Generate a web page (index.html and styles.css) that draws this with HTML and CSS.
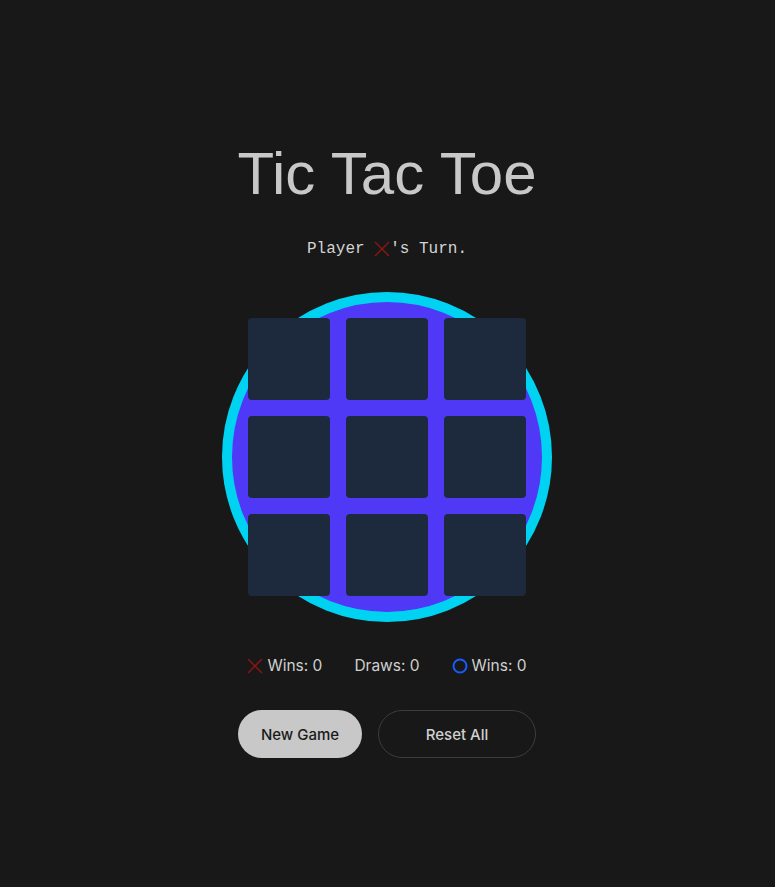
FILE: index.html
```html
<!DOCTYPE html>
<html lang="en">
<head>
<meta charset="utf-8">
<title>Tic Tac Toe</title>
<link rel="stylesheet" href="styles.css">
</head>
<body>
<main class="app">
  <h1 class="title">Tic Tac Toe</h1>
  <p class="turn">Player <svg class="icon-x" viewBox="0 0 16 16" width="16" height="16"><path d="M1 1 L15 15 M15 1 L1 15"/></svg>'s Turn.</p>
  <div class="board">
    <div class="grid">
      <button class="cell"></button><button class="cell"></button><button class="cell"></button>
      <button class="cell"></button><button class="cell"></button><button class="cell"></button>
      <button class="cell"></button><button class="cell"></button><button class="cell"></button>
    </div>
  </div>
  <div class="stats">
    <span class="stat"><svg class="icon-x" viewBox="0 0 16 16" width="16" height="16"><path d="M1 1 L15 15 M15 1 L1 15"/></svg>Wins: 0</span>
    <span class="stat">Draws: 0</span>
    <span class="stat"><svg class="icon-o" viewBox="0 0 16 16" width="16" height="16"><circle cx="8" cy="8" r="6.5"/></svg>Wins: 0</span>
  </div>
  <div class="actions">
    <button class="btn btn-primary">New Game</button>
    <button class="btn btn-outline">Reset All</button>
  </div>
</main>
</body>
</html>
```
FILE: styles.css
```css
* { box-sizing: border-box; }
html, body { margin: 0; background: #181818; }
body { min-height: 887px; color: #c8c8c8; font-family: "Inter", "Liberation Sans", sans-serif; }
.app { display: flex; flex-direction: column; align-items: center; padding-top: 138px; padding-right: 1px; }
.title {
  margin: 0;
  font-family: "Liberation Sans", Arial, sans-serif;
  font-weight: 400;
  font-size: 60px;
  line-height: 72px;
  color: #c8c8c8;
}
.turn {
  margin: 27px 0 0;
  display: flex;
  align-items: center;
  font-family: "Liberation Mono", "DejaVu Sans Mono", monospace;
  font-size: 16px;
  line-height: 24px;
  color: #d4d4d4;
  white-space: pre;
}
.icon-x { fill: none; stroke: #8f1414; stroke-width: 1.4; }
.icon-o { fill: none; stroke: #155dfc; stroke-width: 2; }
.board {
  margin-top: 31px;
  width: 330px;
  height: 330px;
  border-radius: 50%;
  border: 10px solid #00d3f2;
  background: #4f39f6;
  display: grid;
  place-content: center;
}
.grid {
  display: grid;
  grid-template-columns: repeat(3, 82px);
  grid-template-rows: repeat(3, 82px);
  gap: 16px;
}
.cell {
  border: 0;
  padding: 0;
  border-radius: 4px;
  background: #1d293d;
}
.stats {
  margin-top: 34px;
  display: flex;
  gap: 32px;
  font-size: 15.5px;
  line-height: 20px;
  color: #d0d0d0;
}
.stat { display: flex; align-items: center; gap: 4px; }
.actions { margin-top: 34px; display: flex; gap: 16px; }
.btn {
  height: 48px;
  border-radius: 24px;
  font-family: "Inter", "Liberation Sans", sans-serif;
  font-size: 15px;
  font-weight: 500;
  cursor: pointer;
}
.btn-primary { width: 124px; background: #c8c8c8; color: #1a1a1a; border: 0; }
.btn-outline { width: 158px; background: transparent; color: #d0d0d0; border: 1px solid #3c3c3c; }
```
